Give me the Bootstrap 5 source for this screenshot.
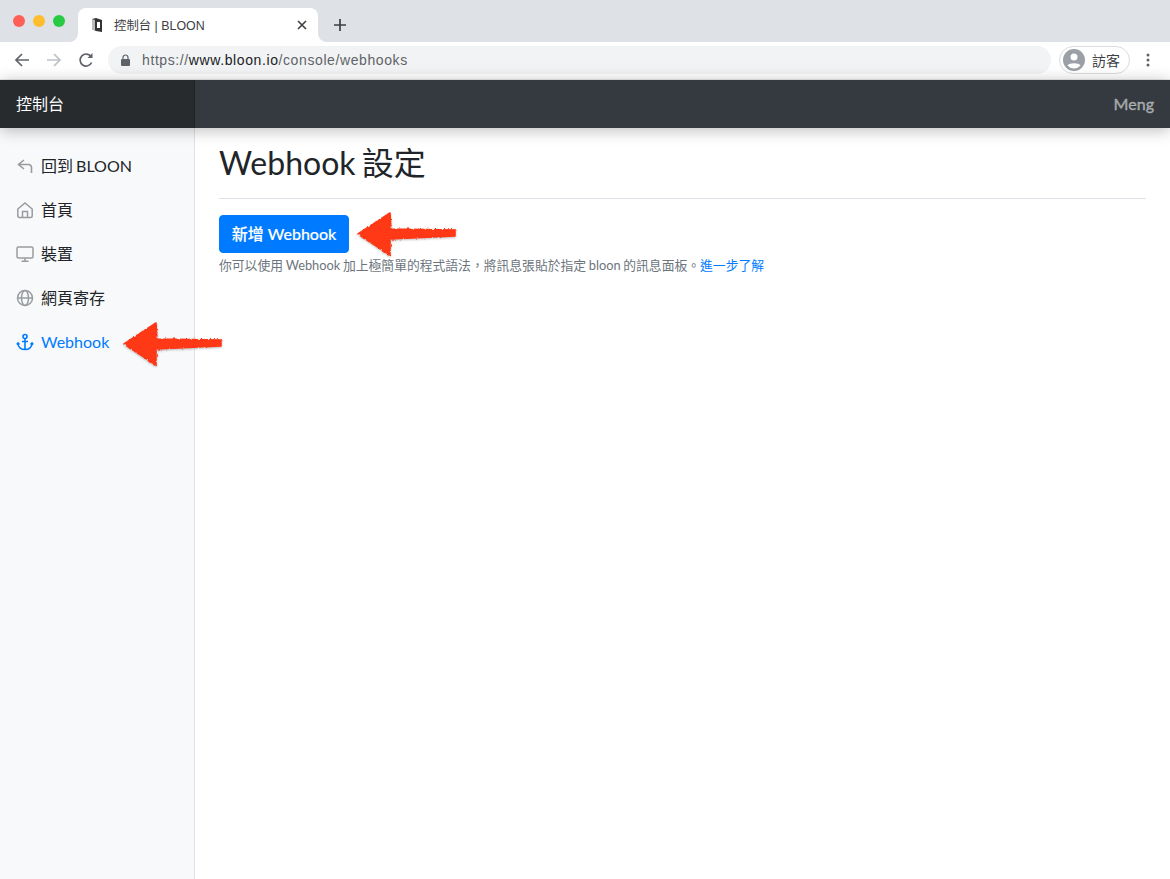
<!DOCTYPE html>
<html lang="zh-Hant">
<head>
  <meta charset="UTF-8">
  <title>控制台 | BLOON</title>
  <link href="https://cdn.jsdelivr.net/npm/bootstrap@5.3.0/dist/css/bootstrap.min.css" rel="stylesheet">
  <style>
    html, body { height: 100%; }
    body {
      font-family: Lato, "Noto Sans CJK TC", sans-serif;
      color: #212529;
      background: #fff;
      overflow: hidden;
      position: relative;
    }
    /* browser frame */
    .tab-strip { height: 42px; background: #dee1e6; padding: 8px 0 0 78px; }
    .traffic { left: 13px; top: 15px; }
    .traffic i { display: block; width: 12px; height: 12px; border-radius: 50%; }
    .tab-shape {
      width: 240px; height: 34px; background: #fff;
      border-radius: 8px 8px 0 0;
      padding: 0 11px 0 14px;
      font: 12.4px "Liberation Sans", "Noto Sans CJK TC", sans-serif;
      color: #3c4043;
      position: relative;
    }
    .tab-shape::before, .tab-shape::after {
      content: ""; position: absolute; bottom: 0; width: 8px; height: 8px;
    }
    .tab-shape::before { left: -8px; background: radial-gradient(circle at 0 0, #dee1e6 7.5px, #fff 8px); }
    .tab-shape::after { right: -8px; background: radial-gradient(circle at 100% 0, #dee1e6 7.5px, #fff 8px); }
    .tab-shape span { margin-left: 12px; }
    .new-tab { width: 44px; font-size: 0; }
    .tool-strip { height: 38px; background: #fff; padding: 0 14px 1px; border-bottom: 1px solid #e8eaed; }
    .addr-pill {
      height: 28px; background: #f1f3f4; border-radius: 14px;
      margin-left: 14px; padding: 0 14px 0 13px; width: 943px;
      font: 14px "Liberation Sans", sans-serif; letter-spacing: .6px; color: #5f6368;
    }
    .addr-pill b { font-weight: 400; color: #202124; }
    .addr-pill svg { margin-right: 12px; }
    .guest-pill {
      width: 71px; height: 28px; margin-left: 8px; padding: 0 3px;
      border: 1px solid #dadce0; border-radius: 14px;
      font-size: 14px; color: #3c4043;
    }
    .guest-pill span { margin-left: 7px; }
    .more-dots { margin-left: 16px; }
    /* app */
    .top-bar { height: 48px; background: #343a40; box-shadow: 0 2px 16px rgba(0,0,0,.28); position: relative; z-index: 2; }
    .top-brand { width: 195px; background: #272b2e; color: #fff; font-size: 16px; padding-left: 16px; border-right: 1px solid #1f2326; }
    .top-user { color: rgba(255,255,255,.5); font-size: 16px; font-weight: 500; -webkit-text-stroke: .3px rgba(255,255,255,.5); padding-right: 16px; }
    .page-body { height: 751px; }
    .side-col { width: 195px; background: #f8f9fa; border-right: 1px solid #dee2e6; padding-top: 16px; flex: none; }
    .side-link { height: 44px; padding-left: 16px; color: #212529; font-size: 16px; text-decoration: none; word-spacing: -1px; }
    .side-link svg { margin-right: 7px; flex: none; color: #999c9f; }
    .side-link.is-on, .side-link.is-on svg { color: #007bff; }
    .main-col { padding: 16px 24px 0; flex: 1; }
    .main-title { font-size: 32px; font-weight: 400; line-height: 38px; padding-bottom: 16px; margin: 0 0 16px; border-bottom: 1px solid #dee2e6; word-spacing: -2px; }
    .add-btn {
      background: #007bff; border-color: #007bff; color: #fff;
      font-size: 16px; font-weight: 500; -webkit-text-stroke: .15px #fff; line-height: 24px; white-space: nowrap;
      padding: 6px 0; border-radius: 4px; display: block; width: 130px;
    }
    .help-line { font-size: 12.8px; color: #6c757d; margin-top: 3px; line-height: 18px; word-spacing: -.6px; }
    .help-line a { color: #007bff; text-decoration: none; }
    /* red arrows drawn on top of the screenshot */
    .red-arrow { position: absolute; z-index: 5; filter: drop-shadow(0 1px 1px rgba(0,0,0,.25)); }
    .arrow-a { left: 356px; top: 211px; }
    .arrow-b { left: 122px; top: 321px; }
  </style>
</head>
<body>
  <div class="tab-strip d-flex position-relative">
    <div class="traffic position-absolute d-flex gap-2">
      <i style="background:#ff5f57"></i><i style="background:#ffbd2e"></i><i style="background:#28ca42"></i>
    </div>
    <div class="tab-shape d-flex align-items-center">
      <svg width="10" height="14" viewBox="0 0 10 14"><path d="M0 1l4-1 6 2v12l-6-1-4-2z" fill="#333"/><path d="M0 1l3 1v11l-3-2z" fill="#bbb"/><rect x="5" y="4" width="3" height="6" fill="#fff"/></svg>
      <span class="flex-grow-1">控制台 | BLOON</span>
      <svg width="10" height="10" viewBox="0 0 10 10"><path d="M1 1l8 8M9 1l-8 8" stroke="#3c4043" stroke-width="1.6"/></svg>
    </div>
    <div class="new-tab d-flex align-items-center justify-content-center">
      <svg width="12" height="12" viewBox="0 0 12 12"><path d="M6 0v12M0 6h12" stroke="#3c4043" stroke-width="1.7"/></svg>
    </div>
  </div>
  <div class="tool-strip d-flex align-items-center">
    <svg width="16" height="16" viewBox="0 0 16 16" fill="none" stroke="#5f6368" stroke-width="1.7"><path d="M15 8H2M8 2L2 8l6 6"/></svg>
    <svg class="ms-3" width="16" height="16" viewBox="0 0 16 16" fill="none" stroke="#bdc1c6" stroke-width="1.7"><path d="M1 8h13M8 2l6 6-6 6"/></svg>
    <svg class="ms-3" width="16" height="16" viewBox="0 0 16 16" fill="none" stroke="#5f6368" stroke-width="1.7"><path d="M13.6 10.500A6 6 0 1 1 13 4.500"/><path d="M14.500 1v5h-5z" fill="#5f6368" stroke="none"/></svg>
    <div class="addr-pill d-flex align-items-center">
      <svg width="9" height="12" viewBox="0 0 9 12"><path d="M2 5V3.500a2.500 2.500 0 0 1 5 0V5" fill="none" stroke="#5f6368" stroke-width="1.200"/><rect y="5" width="9" height="7" rx="1" fill="#5f6368"/></svg>
      <div>https://<b>www.bloon.io</b>/console/webhooks</div>
    </div>
    <div class="guest-pill d-flex align-items-center">
      <svg width="22" height="22" viewBox="0 0 22 22"><circle cx="11" cy="11" r="11" fill="#9aa0a6"/><circle cx="11" cy="8" r="3.500" fill="#fff"/><path d="M4.500 16.500c1.500-3 11.500-3 13 0a8.500 8.500 0 0 1-13 0z" fill="#fff"/></svg>
      <span>訪客</span>
    </div>
    <svg class="more-dots" width="4" height="14" viewBox="0 0 4 14" fill="#5f6368"><circle cx="2" cy="2" r="1.500"/><circle cx="2" cy="7" r="1.500"/><circle cx="2" cy="12" r="1.500"/></svg>
  </div>

  <div class="top-bar d-flex">
    <div class="top-brand d-flex align-items-center">控制台</div>
    <div class="top-user ms-auto d-flex align-items-center">Meng</div>
  </div>

  <div class="page-body d-flex">
    <nav class="side-col">
      <a class="side-link d-flex align-items-center" href="#">
        <svg width="18" height="18" viewBox="0 0 18 18" fill="none" stroke="currentColor" stroke-width="1.600"><path d="M8 3L2.500 7.500 8 12M2.500 7.500h10a3 3 0 0 1 3 3V16"/></svg>回到 BLOON
      </a>
      <a class="side-link d-flex align-items-center" href="#">
        <svg width="18" height="18" viewBox="0 0 18 18" fill="none" stroke="currentColor" stroke-width="1.500"><path d="M1.800 8L9 2l7.200 6v7a1.500 1.500 0 0 1-1.500 1.500H3.300A1.500 1.500 0 0 1 1.800 15zM6.500 16.500V10.500h5v6"/></svg>首頁
      </a>
      <a class="side-link d-flex align-items-center" href="#">
        <svg width="18" height="18" viewBox="0 0 18 18" fill="none" stroke="currentColor" stroke-width="1.500"><rect x="1" y="2" width="16" height="11" rx="1.500"/><path d="M9 13v3M5.500 16.300h7"/></svg>裝置
      </a>
      <a class="side-link d-flex align-items-center" href="#">
        <svg width="18" height="18" viewBox="0 0 18 18" fill="none" stroke="currentColor" stroke-width="1.500"><circle cx="9" cy="9" r="7.500"/><ellipse cx="9" cy="9" rx="3.500" ry="7.500"/><path d="M1.500 9h15"/></svg>網頁寄存
      </a>
      <a class="side-link is-on d-flex align-items-center" href="#">
        <svg width="18" height="18" viewBox="0 0 18 18" fill="none" stroke="currentColor" stroke-width="1.600"><circle cx="9" cy="3.500" r="2"/><path d="M9 5.500V16.500M6 8.500h6M2 10.500c0 3.500 3 6 7 6s7-2.500 7-6M.8 11.500L2 10l1.500 1.500M14.500 11.500L16 10l1.200 1.500"/></svg>Webhook
      </a>
    </nav>
    <main class="main-col">
      <h1 class="main-title">Webhook 設定</h1>
      <button type="button" class="btn add-btn">新增 Webhook</button>
      <div class="help-line">你可以使用 Webhook 加上極簡單的程式語法，將訊息張貼於指定 bloon 的訊息面板。<a href="#">進一步了解</a></div>
    </main>
  </div>

  <svg width="0" height="0" class="position-absolute">
    <filter id="rough" x="-10%" y="-10%" width="120%" height="120%">
      <feTurbulence type="fractalNoise" baseFrequency="0.35" numOctaves="2" seed="4"/>
      <feDisplacementMap in="SourceGraphic" scale="3" xChannelSelector="R" yChannelSelector="G"/>
    </filter>
    <symbol id="hand-arrow" viewBox="0 0 104 46">
      <path d="M2 23L34 2l1 16 64 1 0 6-65 3 0 16z" fill="#ff3714" stroke="#ff3714" stroke-width="1.500" stroke-linejoin="round" filter="url(#rough)"/>
    </symbol>
  </svg>
  <svg class="red-arrow arrow-a" width="104" height="46"><use href="#hand-arrow"/></svg>
  <svg class="red-arrow arrow-b" width="104" height="46"><use href="#hand-arrow"/></svg>
</body>
</html>
